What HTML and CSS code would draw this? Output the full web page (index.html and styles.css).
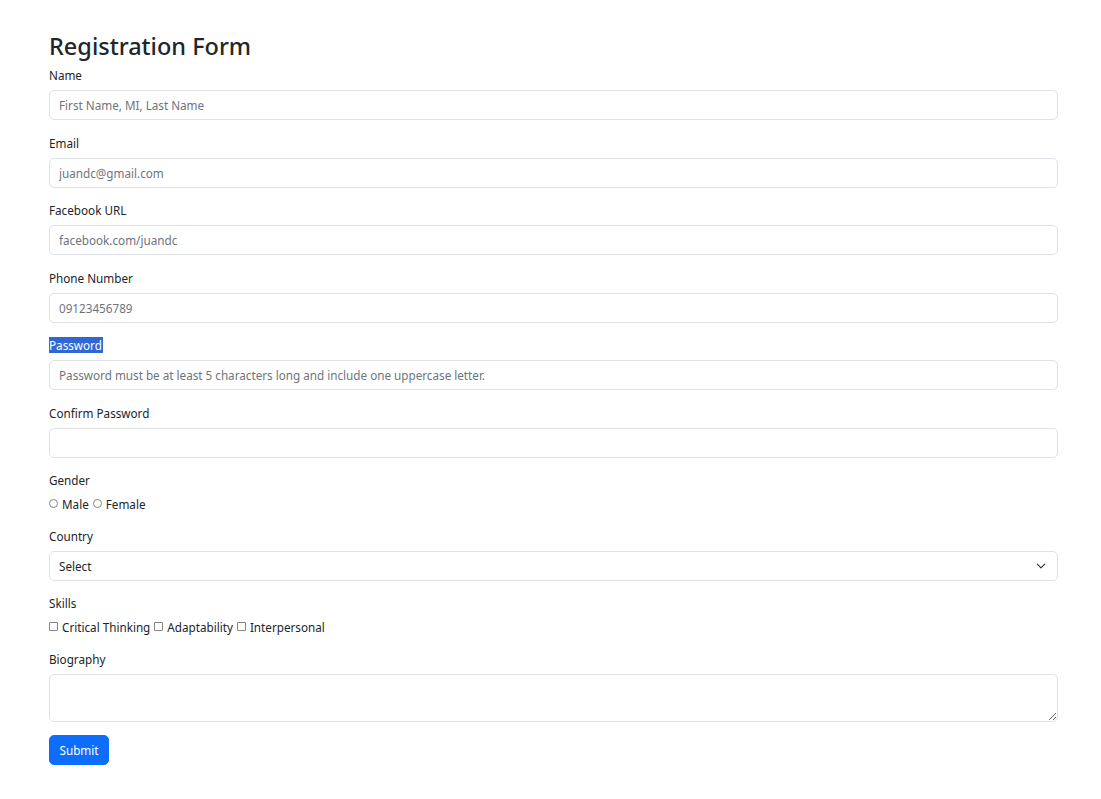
FILE: index.html
```html
<!DOCTYPE html>
<html lang="en">
<head>
<meta charset="utf-8">
<title>Registration Form</title>
<link rel="stylesheet" href="styles.css">
</head>
<body>
<div class="container">
  <h2 class="title">Registration Form</h2>
  <form class="form">
    <div class="field">
      <label class="label">Name</label>
      <input class="control" type="text" placeholder="First Name, MI, Last Name">
    </div>
    <div class="field">
      <label class="label">Email</label>
      <input class="control" type="email" placeholder="juandc@gmail.com">
    </div>
    <div class="field">
      <label class="label">Facebook URL</label>
      <input class="control" type="text" placeholder="facebook.com/juandc">
    </div>
    <div class="field">
      <label class="label">Phone Number</label>
      <input class="control" type="text" placeholder="09123456789">
    </div>
    <div class="field">
      <label class="label"><span class="selected">Password</span></label>
      <input class="control" type="password" placeholder="Password must be at least 5 characters long and include one uppercase letter.">
    </div>
    <div class="field">
      <label class="label">Confirm Password</label>
      <input class="control" type="password">
    </div>
    <div class="field">
      <label class="label">Gender</label>
      <div class="options">
        <input class="radio" type="radio" name="g"><span class="opt">Male</span>
        <input class="radio" type="radio" name="g"><span class="opt">Female</span>
      </div>
    </div>
    <div class="field">
      <label class="label">Country</label>
      <div class="select-wrap">
        <select class="control select">
          <option>Select</option>
        </select>
        <svg class="chevron" width="10" height="10" viewBox="0 0 16 16"><path d="M2 5l6 6 6-6" fill="none" stroke="#343a40" stroke-width="2" stroke-linecap="round" stroke-linejoin="round"/></svg>
      </div>
    </div>
    <div class="field">
      <label class="label">Skills</label>
      <div class="options">
        <input class="check" type="checkbox"><span class="opt">Critical Thinking</span>
        <input class="check" type="checkbox"><span class="opt">Adaptability</span>
        <input class="check" type="checkbox"><span class="opt">Interpersonal</span>
      </div>
    </div>
    <div class="field">
      <label class="label">Biography</label>
      <textarea class="control area"></textarea>
    </div>
    <button class="btn" type="button">Submit</button>
  </form>
</div>
</body>
</html>
```

FILE: styles.css
```css
* { box-sizing: border-box; }
html, body { margin: 0; padding: 0; background: #fff; }
body {
  font-family: "Noto Sans", "Open Sans", sans-serif;
  font-size: 11.7px;
  line-height: 18px;
  color: #212529;
}
.container {
  width: 1009px;
  margin-left: 49px;
  padding-top: 30px;
}
.title {
  margin: 0 0 4px 0;
  font-size: 23.5px;
  line-height: 32px;
  font-weight: 500;
  color: #212529;
}
.form { display: flex; flex-direction: column; }
.field { display: flex; flex-direction: column; margin-bottom: 13.5px; }
.label { display: block; margin-bottom: 6px; line-height: 18px; }
.selected { background: #3167d4; color: #fff; padding: 0 1px 0 0; }
.control {
  display: block;
  width: 100%;
  height: 30px;
  padding: 0 9px;
  font-family: inherit;
  font-size: 11.7px;
  color: #212529;
  background: #fff;
  border: 1px solid #dee2e6;
  border-radius: 5px;
  outline: none;
}
.control::placeholder { color: #6c757d; opacity: 1; }
.options { display: flex; align-items: center; height: 18px; }
.radio, .check {
  appearance: none;
  -webkit-appearance: none;
  width: 9px;
  height: 9px;
  margin: 0 4px 0 0;
  border: 1px solid #858585;
  background: #fff;
  position: relative;
  top: -1px;
}
.radio { border-radius: 50%; }
.check { border-radius: 1px; }
.opt { margin-right: 4px; }
.select-wrap { position: relative; }
.select {
  appearance: none;
  -webkit-appearance: none;
  padding-left: 9px;
}
.chevron { position: absolute; right: 12px; top: 10px; }
.area { height: 48px; padding: 6px 9px; resize: vertical; }
.btn {
  align-self: flex-start;
  width: 60px;
  height: 30px;
  padding: 0;
  font-family: inherit;
  font-size: 11.7px;
  color: #fff;
  background: #0d6efd;
  border: 1px solid #0d6efd;
  border-radius: 5px;
}
```
